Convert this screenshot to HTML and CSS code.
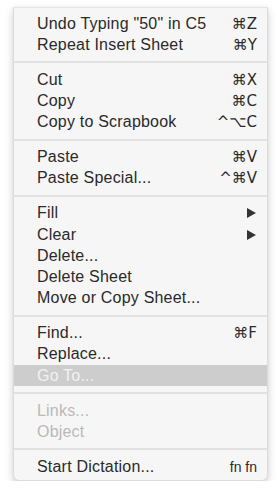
FILE: index.html
```html
<!DOCTYPE html>
<html>
<head>
<meta charset="utf-8">
<link rel="stylesheet" href="styles.css">
</head>
<body>
<div class="menu">
  <div class="item"><span class="label">Undo Typing "50" in C5</span><span class="key">⌘Z</span></div>
  <div class="item"><span class="label">Repeat Insert Sheet</span><span class="key">⌘Y</span></div>
  <div class="sep"></div>
  <div class="item"><span class="label">Cut</span><span class="key">⌘X</span></div>
  <div class="item"><span class="label">Copy</span><span class="key">⌘C</span></div>
  <div class="item"><span class="label">Copy to Scrapbook</span><span class="key">^⌥C</span></div>
  <div class="sep"></div>
  <div class="item"><span class="label">Paste</span><span class="key">⌘V</span></div>
  <div class="item"><span class="label">Paste Special...</span><span class="key">^⌘V</span></div>
  <div class="sep"></div>
  <div class="item"><span class="label">Fill</span><span class="arrow"></span></div>
  <div class="item"><span class="label">Clear</span><span class="arrow"></span></div>
  <div class="item"><span class="label">Delete...</span></div>
  <div class="item"><span class="label">Delete Sheet</span></div>
  <div class="item"><span class="label">Move or Copy Sheet...</span></div>
  <div class="sep"></div>
  <div class="item"><span class="label">Find...</span><span class="key">⌘F</span></div>
  <div class="item"><span class="label">Replace...</span></div>
  <div class="item selected"><span class="label">Go To...</span></div>
  <div class="sep"></div>
  <div class="item disabled"><span class="label">Links...</span></div>
  <div class="item disabled"><span class="label">Object</span></div>
  <div class="sep"></div>
  <div class="item"><span class="label">Start Dictation...</span><span class="key fn">fn fn</span></div>
</div>
</body>
</html>
```

FILE: styles.css
```css
html, body {
  margin: 0;
  background: #ffffff;
}
body {
  padding: 7px 10px 0 13px;
  font-family: "Liberation Sans", Arial, sans-serif;
  font-size: 16px;
  letter-spacing: 0.2px;
  color: #2a2a2a;
}
.menu {
  width: 255px;
  box-sizing: border-box;
  background: #f6f6f6;
  border: 1px solid #dcdcdc;
  border-top-color: #e6e6e6;
  border-radius: 0 0 6px 6px;
  box-shadow: 0 4px 10px rgba(0, 0, 0, 0.18), 0 0 2px rgba(0, 0, 0, 0.08);
  padding: 5px 0 3px;
  display: flex;
  flex-direction: column;
}
.item {
  height: 21.25px;
  display: flex;
  align-items: center;
  justify-content: space-between;
  padding: 0 10px 0 23px;
}
.label {
  white-space: nowrap;
}
.key {
  font-family: "DejaVu Sans", "Liberation Sans", sans-serif;
  font-size: 15px;
  letter-spacing: 0;
}
.key.fn {
  font-family: "Liberation Sans", sans-serif;
  font-size: 14px;
}
.arrow {
  width: 0;
  height: 0;
  border-left: 9px solid #333333;
  border-top: 5px solid transparent;
  border-bottom: 5px solid transparent;
  margin-right: 1px;
}
.sep {
  height: 13.65px;
  display: flex;
  align-items: center;
}
.sep::before {
  content: "";
  display: block;
  width: 100%;
  height: 2px;
  background: #e2e2e2;
}
.selected {
  background: #cdcdcd;
  color: #f2f2f2;
}
.disabled {
  color: #b9b9b9;
}
```
